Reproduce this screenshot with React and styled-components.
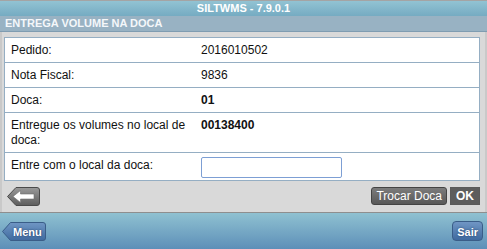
import React from 'react';
import styled, { createGlobalStyle } from 'styled-components';

const GlobalStyle = createGlobalStyle`
    html, body {
        margin: 0;
        padding: 0;
        background: #d9d9d9;
        font-family: "Liberation Sans", Arial, sans-serif;
    }
`;

const rows = [
    { label: 'Pedido:', value: '2016010502' },
    { label: 'Nota Fiscal:', value: '9836' },
    { label: 'Doca:', value: '01', bold: true },
    { label: 'Entregue os volumes no local de doca:', value: '00138400', bold: true },
];

const BackArrow = () => (
    <svg width="34" height="21" viewBox="0 0 34 21">
        <defs>
            <linearGradient id="backFill" x1="0" y1="0" x2="0" y2="1">
                <stop offset="0" stopColor="#9a9a9a" />
                <stop offset="1" stopColor="#5c5c5c" />
            </linearGradient>
        </defs>
        <path d="M0.5 10.5 L9 1.5 H30 Q32.5 1.5 32.5 4 V17 Q32.5 19.5 30 19.5 H9 Z" fill="url(#backFill)" stroke="#4a4a4a" />
        <path d="M6 10.5 L13.5 4.5 V8 H27 V13 H13.5 V16.5 Z" fill="#ffffff" stroke="#6f6f6f" strokeWidth="0.6" />
    </svg>
);

const MenuShape = () => (
    <svg width="45" height="21" viewBox="0 0 45 21">
        <defs>
            <linearGradient id="menuFill" x1="0" y1="0" x2="0" y2="1">
                <stop offset="0" stopColor="#7096c4" />
                <stop offset="1" stopColor="#3f6a9f" />
            </linearGradient>
        </defs>
        <path d="M0.5 10.5 L8.5 1.5 H41 Q43.5 1.5 43.5 4 V17 Q43.5 19.5 41 19.5 H8.5 Z" fill="url(#menuFill)" stroke="#3a5d88" />
    </svg>
);

const App = () => {
    return (
        <>
            <GlobalStyle />
            <Page>
                <TopBar>SILTWMS - 7.9.0.1</TopBar>
                <SubBar>ENTREGA VOLUME NA DOCA</SubBar>
                <Content>
                    <Table>
                        <tbody>
                            {rows.map((row) => (
                                <tr key={row.label}>
                                    <LabelCell>{row.label}</LabelCell>
                                    <ValueCell $bold={row.bold}>{row.value}</ValueCell>
                                </tr>
                            ))}
                            <tr>
                                <LabelCell>Entre com o local da doca:</LabelCell>
                                <ValueCell>
                                    <DocaInput type="text" />
                                </ValueCell>
                            </tr>
                        </tbody>
                    </Table>
                    <Actions>
                        <IconButton aria-label="Voltar">
                            <BackArrow />
                        </IconButton>
                        <ActionGroup>
                            <GreyButton>Trocar Doca</GreyButton>
                            <GreyButton $square $bold>OK</GreyButton>
                        </ActionGroup>
                    </Actions>
                </Content>
                <Footer>
                    <NavButton $back>
                        <MenuShape />
                        <NavLabel>Menu</NavLabel>
                    </NavButton>
                    <NavButton>
                        <NavLabel>Sair</NavLabel>
                    </NavButton>
                </Footer>
            </Page>
        </>
    );
};

const Page = styled.div`
    display: flex;
    flex-direction: column;
    height: 249px;
    width: 487px;
    background: #d9d9d9;
    box-sizing: border-box;
    border-left: 2px solid #c9c9c9;
    border-right: 2px solid #c9c9c9;
`;

const TopBar = styled.div`
    height: 15px;
    border-top: 1px solid #a4a4a4;
    background: linear-gradient(#92c3d3, #75abc2);
    color: #ffffff;
    font-size: 11px;
    font-weight: bold;
    line-height: 15px;
    text-align: center;
    margin: 0 -2px;
`;

const SubBar = styled.div`
    height: 15px;
    background: #98b2c3;
    border-bottom: 1px solid #7f9cb1;
    color: #f4f7fa;
    font-size: 11px;
    font-weight: bold;
    line-height: 15px;
    padding-left: 5px;
    margin: 0 -2px;
`;

const Content = styled.div`
    padding: 5px 5px 0 2px;
`;

const Table = styled.table`
    width: 100%;
    border-collapse: collapse;
    background: #ffffff;
    border: 1px solid #95aec3;
    font-size: 12px;
    color: #111111;

    td {
        border-bottom: 1px solid #95aec3;
        line-height: 15px;
        vertical-align: top;
    }
`;

const LabelCell = styled.td`
    width: 180px;
    padding: 5px 6px 4px 6px;
`;

const ValueCell = styled.td`
    padding: 5px 4px 4px 4px;
    font-weight: ${(p) => (p.$bold ? 'bold' : 'normal')};
`;

const DocaInput = styled.input`
    display: block;
    box-sizing: border-box;
    width: 141px;
    height: 21px;
    margin: -1px 0 -2px 0;
    border: 1px solid #7d9fd4;
    border-radius: 2px;
    background: #ffffff;
`;

const Actions = styled.div`
    display: flex;
    justify-content: space-between;
    align-items: flex-start;
    padding: 5px 0 0 3px;
    height: 26px;
`;

const IconButton = styled.button`
    border: none;
    background: none;
    padding: 0;
    margin: 0;
    height: 21px;
    line-height: 0;
`;

const ActionGroup = styled.div`
    display: flex;
    gap: 3px;
    padding-top: 1px;
`;

const GreyButton = styled.button`
    height: 18px;
    padding: 0 ${(p) => (p.$square ? '5px' : '4px')};
    border: 1px solid ${(p) => (p.$square ? '#5a5a5a' : '#444444')};
    border-radius: ${(p) => (p.$square ? '0' : '3px')};
    background: ${(p) => (p.$square ? '#5d5d5d' : 'linear-gradient(#7c7c7c, #585858)')};
    color: #ffffff;
    font-family: "Liberation Sans", Arial, sans-serif;
    font-size: 12px;
    font-weight: ${(p) => (p.$bold ? 'bold' : 'normal')};
    line-height: 16px;
`;

const Footer = styled.div`
    margin: auto -2px 0;
    height: 37px;
    border-top: 1px solid #8e8e8e;
    background: linear-gradient(#8fc1d1, #5d8fb8);
    display: flex;
    align-items: center;
    justify-content: space-between;
    padding: 0 4px 0 2px;
`;

const NavButton = styled.button`
    position: relative;
    height: 20px;
    padding: ${(p) => (p.$back ? '0 5px 0 11px' : '0 4px')};
    border: ${(p) => (p.$back ? 'none' : '1px solid #3a5d88')};
    border-radius: 4px;
    background: ${(p) => (p.$back ? 'none' : 'linear-gradient(#7096c4, #3f6a9f)')};

    svg {
        position: absolute;
        left: 0;
        top: 0;
    }
`;

const NavLabel = styled.span`
    position: relative;
    color: #ffffff;
    font-family: "Liberation Sans", Arial, sans-serif;
    font-size: 11px;
    font-weight: bold;
    text-shadow: 0 0 2px #1d3a60;
`;

export default App;
